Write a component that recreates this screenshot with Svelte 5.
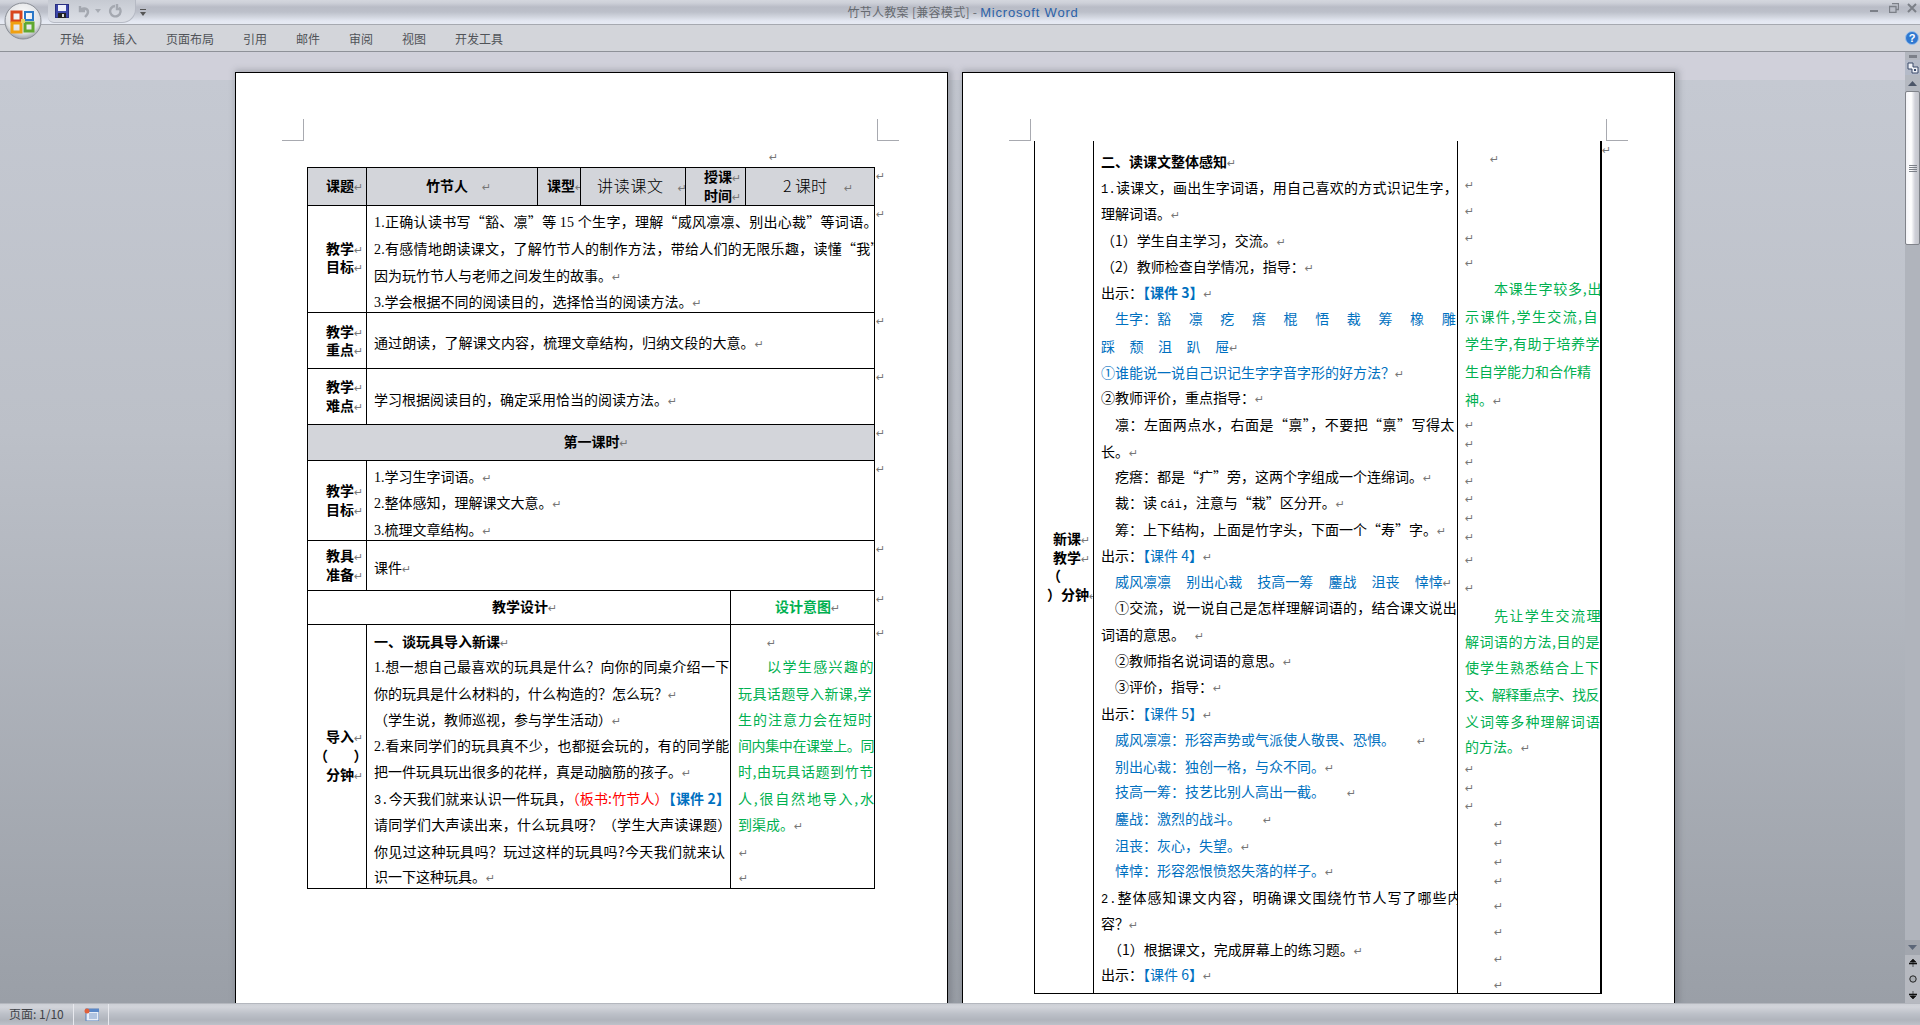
<script>
  const B = 'b', BL = 'bl', BB = 'bl b', R = 'rd', G = 'gr', M = 'm', S = 's', GB = 'gr b';
  const L = (c, t, o = {}) => ({ c, runs: typeof t === 'string' ? [[t, '']] : t, i: 0, ls: 0, ws: 0, pm: true, pg: 0, ...o });
  const flow = (list, top) => {
    let prev = top + 1;
    return list.map((l) => {
      const mt = l.c - 9 - prev;
      prev = l.c + 9;
      return { ...l, mt };
    });
  };
  const lab = (c, t, o = {}) => L(c, [[t, B]], { i: 18, ...o });

  const tabs = ['开始', '插入', '页面布局', '引用', '邮件', '审阅', '视图', '开发工具'];

  const goals = [
    L(222, [['1.', S], ['正确认读书写“豁、凛”等 ', ''], ['15', S], [' 个生字，理解“威风凛凛、别出心裁”等词语。', '']], { pm: false, ls: 0.28 }),
    L(249, [['2.', S], ['有感情地朗读课文，了解竹节人的制作方法，带给人们的无限乐趣，读懂“我”', '']], { pm: false, ls: 0.28 }),
    L(276, '因为玩竹节人与老师之间发生的故事。'),
    L(302, [['3.', S], ['学会根据不同的阅读目的，选择恰当的阅读方法。', '']])
  ];
  const goals2 = [
    L(477, [['1.', S], ['学习生字词语。', '']]),
    L(503, [['2.', S], ['整体感知，理解课文大意。', '']]),
    L(530, [['3.', S], ['梳理文章结构。', '']])
  ];
  const intro = [
    L(642, [['一、谈玩具导入新课', B]]),
    L(667, [['1.', S], ['想一想自己最喜欢的玩具是什么？向你的同桌介绍一下', '']], { pm: false, ls: 0.35 }),
    L(694, '你的玩具是什么材料的，什么构造的？怎么玩？'),
    L(720, '（学生说，教师巡视，参与学生活动）'),
    L(746, [['2.', S], ['看来同学们的玩具真不少，也都挺会玩的，有的同学能', '']], { pm: false, ls: 0.35 }),
    L(772, '把一件玩具玩出很多的花样，真是动脑筋的孩子。'),
    L(799, [['3.', M], ['今天我们就来认识一件玩具，', ''], ['（板书:竹节人）', R], ['【课件 2】', BB]], { pm: false, ls: 0.15 }),
    L(825, '请同学们大声读出来，什么玩具呀？（学生大声读课题）', { pm: false, ls: 0.3 }),
    L(852, '你见过这种玩具吗？玩过这样的玩具吗?今天我们就来认', { pm: false, ls: 0.35 }),
    L(877, '识一下这种玩具。')
  ];
  const introG = [
    L(642, '', { i: 29 }),
    L(667, [['以学生感兴趣的', G]], { i: 29, ls: 1.4, pm: false }),
    L(694, [['玩具话题导入新课,学', G]], { pm: false, ls: 0.4 }),
    L(720, [['生的注意力会在短时', G]], { pm: false, ls: 1 }),
    L(746, [['间内集中在课堂上。同', G]], { pm: false, ls: -0.4 }),
    L(772, [['时,由玩具话题到竹节', G]], { pm: false, ls: 0.6 }),
    L(799, [['人,很自然地导入,水', G]], { pm: false, ls: 1.8 }),
    L(825, [['到渠成。', G]]),
    L(852, '', { i: 1 }),
    L(877, '', { i: 1 })
  ];

  const main2 = [
    L(162, [['二、读课文整体感知', B]]),
    L(188, [['1.', M], ['读课文，画出生字词语，用自己喜欢的方式识记生字，', '']], { pm: false, ls: 0.25 }),
    L(214, '理解词语。'),
    L(241, '（1）学生自主学习，交流。'),
    L(267, '（2）教师检查自学情况，指导：'),
    L(293, [['出示：', ''], ['【课件 3】', BB]]),
    L(319, [['生字：豁 凛 疙 瘩 棍 悟 裁 筹 橡 雕', BL]], { i: 14, ws: 14.5, pm: false }),
    L(347, [['踩 颓 沮 趴 屉', BL]], { ws: 11.4 }),
    L(373, [['①谁能说一说自己识记生字字音字形的好方法？', BL]]),
    L(398, '②教师评价，重点指导：'),
    L(425, '凛：左面两点水，右面是“禀”，不要把“禀”写得太', { i: 14, pm: false, ls: 0.45 }),
    L(452, '长。'),
    L(477, '疙瘩：都是“疒”旁，这两个字组成一个连绵词。', { i: 14 }),
    L(503, [['裁：读 ', ''], ['cái', M], ['，注意与“栽”区分开。', '']], { i: 14 }),
    L(530, '筹：上下结构，上面是竹字头，下面一个“寿”字。', { i: 14 }),
    L(556, [['出示：', ''], ['【课件 4】', BL]]),
    L(582, [['威风凛凛 别出心裁 技高一筹 鏖战 沮丧 悻悻', BL]], { i: 14, ws: 12 }),
    L(608, '①交流，说一说自己是怎样理解词语的，结合课文说出', { i: 14, pm: false, ls: 0.25 }),
    L(635, '词语的意思。', { pg: 10 }),
    L(661, '②教师指名说词语的意思。', { i: 14 }),
    L(687, '③评价，指导：', { i: 14 }),
    L(714, [['出示：', ''], ['【课件 5】', BL]]),
    L(740, [['威风凛凛：形容声势或气派使人敬畏、恐惧。', BL]], { i: 14, pg: 22 }),
    L(767, [['别出心裁：独创一格，与众不同。', BL]], { i: 14 }),
    L(792, [['技高一筹：技艺比别人高出一截。', BL]], { i: 14, pg: 22 }),
    L(819, [['鏖战：激烈的战斗。', BL]], { i: 14, pg: 22 }),
    L(846, [['沮丧：灰心，失望。', BL]], { i: 14 }),
    L(871, [['悻悻：形容怨恨愤怒失落的样子。', BL]], { i: 14 }),
    L(898, [['2.', M], ['整体感知课文内容，明确课文围绕竹节人写了哪些内', '']], { ls: 1, pm: false }),
    L(924, '容？'),
    L(950, '（1）根据课文，完成屏幕上的练习题。', { i: 7 }),
    L(975, [['出示：', ''], ['【课件 6】', BL]])
  ];
  const mark = (c, i = 0) => L(c, '', { i });
  const green2 = [
    mark(158, 25),
    mark(184), mark(210), mark(237), mark(262),
    L(289, [['本课生字较多,出', G]], { i: 29, ls: 0.8, pm: false }),
    L(317, [['示课件,学生交流,自', G]], { pm: false, ls: 1.4 }),
    L(344, [['学生字,有助于培养学', G]], { pm: false, ls: 0.5 }),
    L(372, [['生自学能力和合作精', G]], { pm: false, ls: 0 }),
    L(400, [['神。', G]]),
    mark(424), mark(443), mark(461), mark(480), mark(498), mark(517), mark(536), mark(559), mark(587),
    L(616, [['先让学生交流理', G]], { i: 29, ls: 1.4, pm: false }),
    L(642, [['解词语的方法,目的是', G]], { pm: false, ls: 0.5 }),
    L(668, [['使学生熟悉结合上下', G]], { pm: false, ls: 1 }),
    L(695, [['文、解释重点字、找反', G]], { pm: false, ls: -0.6 }),
    L(722, [['义词等多种理解词语', G]], { pm: false, ls: 1.1 }),
    L(747, [['的方法。', G]]),
    mark(768), mark(787), mark(805),
    mark(823, 29), mark(842, 29), mark(861, 29), mark(880, 29), mark(905, 29), mark(931, 29), mark(958, 29), mark(984, 29)
  ];
  const label2 = [
    L(539, [['新课', B]], { i: 18 }),
    L(558, [['教学', B]], { i: 18 }),
    L(576, [['（', B]], { i: 12, pm: false }),
    L(595, [['）分钟', B]], { i: 12 })
  ];
</script>

{#snippet lines(list, top)}
  {#each flow(list, top) as l}
    <div class="line" style="margin-top:{l.mt}px;padding-left:{l.i}px;letter-spacing:{l.ls}px;word-spacing:{l.ws}px">{#each l.runs as r}<span class={r[1]}>{r[0]}</span>{/each}{#if l.pm}<span class="pm" style="margin-left:{l.pg}px">↵</span>{/if}</div>
  {/each}
{/snippet}

<div class="app">
  <header class="title">
    <div class="qat">
      <svg class="save" viewBox="0 0 14 14" width="14" height="14"><rect x="0.5" y="0.5" width="13" height="13" fill="#3c46a8" stroke="#2a3080"/><rect x="3" y="1" width="8" height="6" fill="#eef0fa"/><rect x="3" y="9" width="8" height="5" fill="#222"/><rect x="7" y="10" width="2" height="3" fill="#ddd"/></svg>
      <svg class="undo" viewBox="0 0 14 14" width="14" height="14"><path d="M4 2v5h5M4 7c2-4 8-3 8 1 0 2-1 3-3 5" fill="none" stroke="#a4a8b0" stroke-width="2.4"/></svg>
      <svg class="caret" viewBox="0 0 6 4" width="6" height="4"><path d="M0 0h6L3 4z" fill="#a8acb4"/></svg>
      <svg class="redo" viewBox="0 0 14 14" width="14" height="14"><path d="M7 2a5.2 5.2 0 1 0 4 1.5M9 0v5h4" fill="none" stroke="#a4a8b0" stroke-width="2.4"/></svg>
      <svg class="more" viewBox="0 0 6 7" width="6" height="7"><path d="M0 0h6v1H0zM0 3h6L3 7z" fill="#555"/></svg>
    </div>
    <div class="caption">竹节人教案 [兼容模式] - <span>Microsoft Word</span></div>
    <div class="win">
      <svg class="minb" viewBox="0 0 8 4" width="8" height="4"><rect y="1" width="8" height="2" fill="#7c8088"/></svg>
      <svg viewBox="0 0 10 10" width="10" height="10"><path d="M3 .5h6.500v6H7M.5 3.500h6.500v6H.5z" fill="none" stroke="#7c8088" stroke-width="1.300"/></svg>
      <svg viewBox="0 0 10 10" width="10" height="10"><path d="M1 1l8 8M9 1l-8 8" stroke="#7c8088" stroke-width="2"/></svg>
    </div>
  </header>

  <div class="orb">
    <svg viewBox="0 0 38 38" width="38" height="38">
      <defs><radialGradient id="og" cx="50%" cy="35%" r="65%"><stop offset="0" stop-color="#fdfdfd"/><stop offset=".75" stop-color="#dfe1e4"/><stop offset="1" stop-color="#9ea2a8"/></radialGradient></defs>
      <circle cx="19" cy="19" r="18" fill="url(#og)" stroke="#8a8e96"/>
      <path d="M8 10h9v9H8z" fill="none" stroke="#d8441c" stroke-width="3"/>
      <path d="M21 10h8v8h-8z" fill="none" stroke="#2a78c8" stroke-width="2"/>
      <path d="M8 21h9v9H8z" fill="none" stroke="#f0a010" stroke-width="3"/>
      <path d="M21 21h8v8h-8z" fill="none" stroke="#60a830" stroke-width="3"/>
      <path d="M17 17h4v4h-4z" fill="#e8d060"/>
    </svg>
  </div>

  <nav class="ribbon">
    {#each tabs as t}<span>{t}</span>{/each}
    <svg class="help" viewBox="0 0 14 14" width="14" height="14"><circle cx="7" cy="7" r="6.500" fill="#2f78d0" stroke="#9cc0ea"/><text x="7" y="11" text-anchor="middle" font-size="11" font-weight="700" fill="#fff" font-family="Liberation Sans">?</text></svg>
  </nav>

  <main class="doc">
    <div class="pages">
      <section class="page">
        <i class="crop tl"></i><i class="crop tr"></i>
        <span class="pm top">↵</span>
        <div class="table">
          <div class="row r1 shade" style="height:38px">
            <div class="cell" >{@render lines([lab(186, '课题')], 168)}</div>
            <div class="cell">{@render lines([L(186, [['竹节人', B]], { i: 59, pg: 14 })], 168)}</div>
            <div class="cell">{@render lines([L(186, [['课型', B]], { i: 9 })], 168)}</div>
            <div class="cell">{@render lines([L(186, [['讲读课文', 'big']], { i: 16, pg: 14, ls: 0.7 })], 168)}</div>
            <div class="cell">{@render lines([L(177, [['授课', B]], { i: 18 }), L(196, [['时间', B]], { i: 18 })], 168)}</div>
            <div class="cell last">{@render lines([L(186, [['2 课时', 'big']], { i: 37, pg: 17 })], 168)}</div>
            <span class="pm end">↵</span>
          </div>
          <div class="row r2" style="height:107px">
            <div class="cell">{@render lines([lab(249, '教学'), lab(267, '目标')], 206)}</div>
            <div class="cell last txt">{@render lines(goals, 206)}</div>
            <span class="pm end">↵</span>
          </div>
          <div class="row r2" style="height:56px">
            <div class="cell">{@render lines([lab(332, '教学'), lab(350, '重点')], 313)}</div>
            <div class="cell last txt">{@render lines([L(343, '通过朗读，了解课文内容，梳理文章结构，归纳文段的大意。', { ls: 0.1 })], 313)}</div>
            <span class="pm end">↵</span>
          </div>
          <div class="row r2" style="height:56px">
            <div class="cell">{@render lines([lab(387, '教学'), lab(406, '难点')], 369)}</div>
            <div class="cell last txt">{@render lines([L(400, '学习根据阅读目的，确定采用恰当的阅读方法。')], 369)}</div>
            <span class="pm end">↵</span>
          </div>
          <div class="row shade center" style="height:36px">
            <div class="cell last">{@render lines([L(442, [['第一课时', B]], { i: 10 })], 425)}</div>
            <span class="pm end">↵</span>
          </div>
          <div class="row r2" style="height:80px">
            <div class="cell">{@render lines([lab(491, '教学'), lab(510, '目标')], 461)}</div>
            <div class="cell last txt">{@render lines(goals2, 461)}</div>
            <span class="pm end">↵</span>
          </div>
          <div class="row r2" style="height:50px">
            <div class="cell">{@render lines([lab(556, '教具'), lab(575, '准备')], 541)}</div>
            <div class="cell last txt">{@render lines([L(568, '课件')], 541)}</div>
            <span class="pm end">↵</span>
          </div>
          <div class="row r8" style="height:34px">
            <div class="cell center">{@render lines([L(607, [['教学设计', B]], { i: 11 })], 591)}</div>
            <div class="cell last center">{@render lines([L(607, [['设计意图', GB]], { i: 10 })], 591)}</div>
            <span class="pm end">↵</span>
          </div>
          <div class="row r9 nobb" style="height:263px">
            <div class="cell">{@render lines([lab(737, '导入'), L(756, [['（        ）', B]], { i: 6, pm: false }), lab(775, '分钟')], 625)}</div>
            <div class="cell txt">{@render lines(intro, 625)}</div>
            <div class="cell last txt">{@render lines(introG, 625)}</div>
            <span class="pm end">↵</span>
          </div>
        </div>
      </section>

      <section class="page">
        <i class="crop tl two"></i><i class="crop tr two"></i>
        <div class="table second">
          <div class="row r3" style="height:852px">
            <div class="cell">{@render lines(label2, 141)}</div>
            <div class="cell txt">{@render lines(main2, 141)}</div>
            <div class="cell last txt">{@render lines(green2, 141)}</div>
            <span class="pm end endb">↵</span>
          </div>
        </div>
      </section>
    </div>

    <aside class="scroll">
      <div class="split"></div>
      <div class="ruler"><svg viewBox="0 0 12 12" width="12" height="12"><path d="M1 1h5v4h5v6H5V7H1z" fill="#eef0f6" stroke="#3a4a6a"/><path d="M7 7l2 2M9 7l-2 2" stroke="#3a4a6a"/></svg></div>
      <div class="sbtn"><svg viewBox="0 0 9 5" width="9" height="5"><path d="M4.500 0L9 5H0z" fill="#4c5668"/></svg></div>
      <div class="thumb"><svg viewBox="0 0 8 7" width="8" height="7"><path d="M0 .5h8M0 2.500h8M0 4.500h8M0 6.500h8" stroke="#7c8088"/></svg></div>
      <div class="track"></div>
      <div class="sbtn down"><svg viewBox="0 0 9 5" width="9" height="5"><path d="M0 0h9L4.500 5z" fill="#5c6678"/></svg></div>
      <div class="browse">
        <svg viewBox="0 0 8 8" width="8" height="8"><path d="M4 0l3 3H1zM0 4h8v1H0zM4 2v6" stroke="#111" fill="#111" stroke-width=".6"/></svg>
        <svg viewBox="0 0 8 8" width="8" height="8"><circle cx="4" cy="4" r="3.200" fill="#a8acb2" stroke="#222"/></svg>
        <svg viewBox="0 0 8 8" width="8" height="8"><path d="M4 8l3-3H1zM0 3h8v1H0zM4 0v6" stroke="#111" fill="#111" stroke-width=".6"/></svg>
      </div>
    </aside>
  </main>

  <footer class="status">
    <span class="pageno">页面: 1/10</span>
    <span class="ico"><svg viewBox="0 0 15 13" width="15" height="13"><rect x="2" y="1" width="13" height="12" fill="#e8eef8" stroke="#5a80b8"/><rect x="2" y="1" width="13" height="3" fill="#5a88c8"/><path d="M5 6h8M5 8h8M5 10h8" stroke="#7a9ac8"/><circle cx="3" cy="3" r="2.500" fill="#e0603a"/></svg></span>
    <span class="rest"></span>
  </footer>
</div>

<style>
  :global(body) { margin: 0; overflow: hidden; }
  .app {
    position: relative;
    width: 1920px;
    height: 1025px;
    display: flex;
    flex-direction: column;
    overflow: hidden;
    font-family: "Noto Sans CJK SC", sans-serif;
    font-size: 14px;
    color: #000;
  }
  .title {
    height: 24px;
    flex: none;
    display: flex;
    align-items: center;
    justify-content: center;
    position: relative;
    background: linear-gradient(#d4d7de 0, #cdd0d8 3px, #b9bcc6 7px, #bcc0ca 12px, #d2d6df 17px, #e4e8f2 21px, #e6eaf3 24px);
    border-bottom: 1px solid #a6a9b0;
  }
  .qat {
    position: absolute;
    left: 48px;
    top: 0;
    width: 88px;
    height: 23px;
    display: flex;
    align-items: center;
    gap: 0;
    padding-left: 7px;
    box-sizing: border-box;
    border: 1px solid #b6bac4;
    border-top: 0;
    border-left: 0;
    border-radius: 0 0 14px 6px;
    background: linear-gradient(#c6cad2, #dcdfe6);
  }
  .save { margin-right: 7px; }
  .caret { margin: 0 7px 0 5px; }
  .more { position: absolute; left: 92px; top: 9px; }
  .caption { font-size: 12px; color: #666a70; letter-spacing: 0.3px; margin-left: 6px; margin-top: 0; line-height: 16px; white-space: pre; }
  .caption span { color: #2c62a8; font-family: "Liberation Sans", sans-serif; font-size: 13px; letter-spacing: 0.8px; }
  .win { position: absolute; right: 3px; top: 3px; display: flex; gap: 8px; align-items: center; }
  .minb { margin-top: 6px; margin-right: 3px; }
  .orb { position: absolute; left: 4px; top: 2px; z-index: 3; width: 38px; height: 38px; }
  .ribbon {
    height: 26px;
    flex: none;
    background: #d3d5da;
    border-bottom: 1px solid #8e9198;
    display: flex;
    align-items: center;
    gap: 29px;
    padding-left: 60px;
    font-size: 12px;
    color: #505358;
    position: relative;
  }
  .help { position: absolute; right: 1px; top: 6px; }
  .doc {
    flex: 1;
    min-height: 0;
    display: flex;
    background: linear-gradient(#d0d0da 0, #d0d0da 28px, #c5c9d2 28px, #bcc0c8 40%, #9a9fa7 100%);
  }
  .pages {
    flex: 1;
    display: flex;
    gap: 14px;
    padding: 20px 0 0 235px;
    overflow: hidden;
  }
  .page {
    position: relative;
    width: 713px;
    box-sizing: border-box;
    background: #fff;
    border: 1px solid #000;
    border-bottom: 0;
    box-shadow: 2px 0 6px 2px rgba(90, 92, 100, 0.35);
    flex: none;
  }
  .crop { position: absolute; width: 21px; height: 21px; top: 46px; border-bottom: 1px solid #a8aab0; }
  .crop.tl { left: 46px; border-right: 1px solid #a8aab0; }
  .crop.tr { left: 641px; border-left: 1px solid #a8aab0; }
  .crop.tl.two { left: 46px; }
  .crop.tr.two { left: 643px; }
  .top { position: absolute; left: 533px; top: 76px; line-height: 18px; }
  .table {
    position: absolute;
    left: 71px;
    top: 94px;
    width: 568px;
    box-sizing: border-box;
    border: 1px solid #000;
  }
  .table.second {
    left: 71px;
    top: 68px;
    width: 568px;
    border-top: 0;
    border-width: 0 2px 1px 1px;
  }
  .row {
    display: grid;
    box-sizing: border-box;
    border-bottom: 1px solid #000;
    position: relative;
  }
  .nobb { border-bottom: 0; }
  .r1 { grid-template-columns: 59px 171px 43px 105px 60px 1fr; }
  .r2 { grid-template-columns: 59px 1fr; }
  .r8 { grid-template-columns: 423px 1fr; }
  .r9 { grid-template-columns: 59px 364px 1fr; }
  .r3 { grid-template-columns: 59px 364px 1fr; border-bottom: 0; }
  .shade { background: #d3d5da; }
  .cell { border-right: 1px solid #000; overflow: hidden; min-width: 0; }
  .cell.last { border-right: 0; }
  .txt { padding-left: 7px; }
  .center .line, .center.cell .line { text-align: center; }
  .line { height: 18px; line-height: 18px; white-space: pre; }
  .b { font-weight: 700; }
  .bl { color: #0070c0; }
  .rd { color: #ff0000; }
  .gr { color: #00b050; }
  .s { font-family: "Liberation Serif", serif; }
  .m { font-family: "Liberation Mono", monospace; font-size: 12px; }
  .big { font-size: 16px; font-weight: 300; }
  .pm { font-family: "DejaVu Sans", sans-serif; font-size: 11px; color: #777; font-weight: 400; letter-spacing: 0; }
  .end { position: absolute; left: 100%; top: 0; line-height: 18px; margin-left: 2px; }
  .endb { top: 1px; }
  .scroll { width: 15px; flex: none; display: flex; flex-direction: column; align-items: stretch; background: #b3b7bf; box-sizing: border-box; padding-top: 3px; }
  .split { height: 3px; width: 8px; background: #7c8088; margin: 0 0 2px 4px; flex: none; }
  .ruler { height: 15px; display: flex; align-items: center; justify-content: center; background: #b4bac8; flex: none; }
  .sbtn { height: 16px; display: flex; align-items: center; justify-content: center; flex: none; background: #b4b8c0; }
  .thumb {
    height: 154px;
    flex: none;
    box-sizing: border-box;
    border: 1px solid #80838a;
    border-radius: 2px;
    background: linear-gradient(90deg, #f4f4f8 0, #fff 40%, #cfd0d8 70%, #c4c6cc 100%);
    display: flex;
    align-items: center;
    justify-content: center;
  }
  .track { flex: 1; background: #b0b4bc; }
  .down { height: 15px; background: #a2a6ae; }
  .browse { height: 48px; flex: none; display: flex; flex-direction: column; align-items: center; justify-content: space-around; background: #b6b9c0; }
  .status {
    height: 22px;
    flex: none;
    display: flex;
    background: linear-gradient(#cdd0d6 0, #d2d4da 3px, #bcc0c8 10px, #b0b4bc 16px, #c0c4cc 22px);
    border-top: 1px solid #b4b7be;
    box-sizing: border-box;
    font-size: 12px;
    color: #404348;
  }
  .pageno { width: 74px; padding-left: 9px; box-sizing: border-box; line-height: 19px; border-right: 1px solid #e8e9ee; white-space: pre; }
  .ico { width: 34px; display: flex; align-items: center; justify-content: center; border-right: 1px solid #e8e9ee; }
  .rest { flex: 1; }
</style>
